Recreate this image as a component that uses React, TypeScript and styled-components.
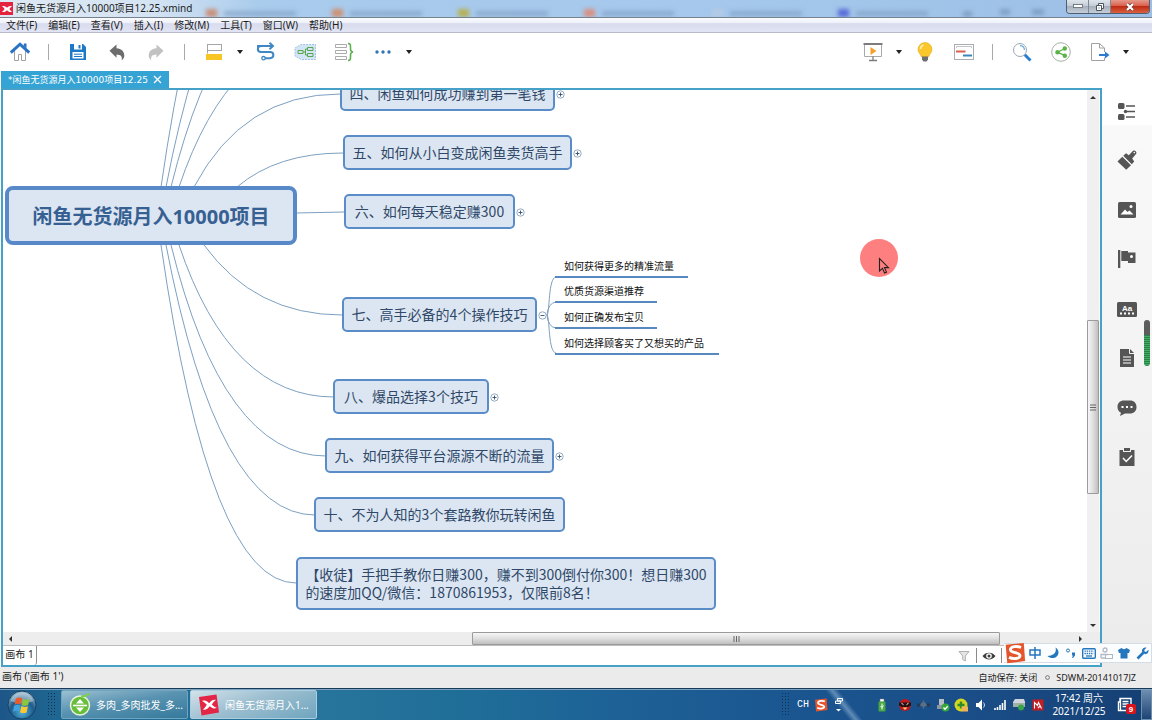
import React from 'react';
import styled, { createGlobalStyle, css } from 'styled-components';

const GlobalStyle = createGlobalStyle`
  * { box-sizing: border-box; }
  html, body { margin: 0; padding: 0; }
  body {
    font-family: "Noto Sans", "Noto Sans CJK SC", sans-serif;
    font-size: 10px;
    line-height: 14px;
    color: #1b1b1b;
    background: #fff;
    overflow: hidden;
  }
  button {
    font: inherit;
    color: inherit;
    border: 0;
    padding: 0;
    margin: 0;
    background: none;
  }
  svg { display: block; }
`;

const Desktop = styled.div`
  position: relative;
  display: flex;
  flex-direction: column;
  height: 100vh;
`;

/* ---------- title bar ---------- */

const TitleBar = styled.header`
  position: relative;
  display: flex;
  align-items: center;
  flex: 0 0 18px;
  overflow: hidden;
  border-bottom: 1px solid #77828f;
  background: linear-gradient(90deg, #dde8f2 0, #d5e4f3 150px, #a9cbec 260px, #a5c8ec 60%, #9dbfe6 100%);
`;

const Backdrop = styled.svg`
  position: absolute;
  left: 0;
  top: 0;
`;

const AppMark = styled.span`
  position: relative;
  display: grid;
  place-items: center;
  width: 13px;
  height: 13px;
  background: #e4243f;
`;

const Title = styled.h1`
  position: relative;
  margin: 0 0 0 3px;
  font-size: 10px;
  line-height: 17px;
  font-weight: 400;
`;

const WindowControls = styled.div`
  position: relative;
  display: flex;
  align-self: flex-start;
  height: 14px;
  margin: 0 2px 0 auto;
  border: 1px solid #4e5f74;
  border-top: 0;
  border-radius: 0 0 4px 4px;
  overflow: hidden;
`;

const WindowButton = styled.button<{ $close?: boolean }>`
  display: grid;
  place-items: center;
  width: ${(p) => (p.$close ? 38 : 22)}px;
  border-right: ${(p) => (p.$close ? 0 : 1)}px solid #7b8794;
  background: ${(p) =>
    p.$close
      ? 'linear-gradient(#e59a8c 0, #d9604b 45%, #bf2c15 50%, #d9613f 100%)'
      : 'linear-gradient(#dfe5ec 0, #c4ccd6 45%, #a7b1bd 50%, #c5ced8 100%)'};
`;

/* ---------- menu bar and toolbar ---------- */

const MenuBar = styled.nav`
  display: flex;
  align-items: center;
  gap: 11px;
  flex: 0 0 15px;
  padding-left: 6px;
  border-bottom: 1px solid #b9bbcb;
  background: linear-gradient(#f9fbfe 0, #eef1f9 35%, #d8dcee 40%, #e1e4f3 100%);
`;

const MenuItem = styled.button`
  line-height: 14px;
  white-space: nowrap;
`;

const Toolbar = styled.div`
  display: flex;
  align-items: center;
  flex: 0 0 38px;
  padding-right: 20px;
`;

const ToolButton = styled.button`
  display: grid;
  place-items: center;
  flex: 0 0 39px;
  height: 38px;
`;

const CaretButton = styled(ToolButton)`
  flex-basis: 13px;
`;

const Divider = styled.span`
  flex: 0 0 1px;
  height: 16px;
  margin: 0 9px;
  background: #a9a9a9;
`;

const Spacer = styled.span<{ $grow?: number }>`
  flex: ${(p) => p.$grow ?? 1} 1 0;
`;

/* ---------- workspace ---------- */

const Workspace = styled.div`
  display: flex;
  flex: 1;
  min-height: 0;
`;

const EditorColumn = styled.main`
  display: flex;
  flex-direction: column;
  flex: 1;
  min-width: 0;
  padding-left: 1px;
  background: #fff;
`;

const TabRow = styled.div`
  display: flex;
  flex: 0 0 17px;
`;

const DocumentTab = styled.div`
  display: flex;
  align-items: center;
  gap: 5px;
  padding: 0 7px;
  color: #fff;
  background: #35a3d3;
`;

const TabLabel = styled.span`
  font-family: "DejaVu Sans", "Noto Sans CJK SC", sans-serif;
  font-size: 9px;
  white-space: nowrap;
`;

const Frame = styled.section`
  display: flex;
  flex-direction: column;
  flex: 1;
  min-height: 0;
  border: 2px solid #46a1c9;
`;

const CanvasRow = styled.div`
  display: flex;
  flex: 1;
  min-height: 0;
`;

const Canvas = styled.div`
  position: relative;
  flex: 1;
  min-width: 0;
  overflow: hidden;
  background: #fff;
`;

const Links = styled.svg`
  position: absolute;
  left: 0;
  top: 0;
`;

const placed = css<{ $x: number; $y: number; $w: number; $h: number }>`
  position: absolute;
  left: ${(p) => p.$x}px;
  top: ${(p) => p.$y}px;
  width: ${(p) => p.$w}px;
  height: ${(p) => p.$h}px;
`;

const CentralTopic = styled.div`
  ${placed}
  display: grid;
  place-items: center;
  padding-top: 2px;
  border: 4px solid #5789c9;
  border-radius: 8px;
  background: #dce6f2;
  color: #376092;
  font-size: 20px;
  line-height: 28px;
  font-weight: 700;
  white-space: nowrap;
`;

const MainTopic = styled.div`
  ${placed}
  display: grid;
  place-items: center;
  padding-bottom: 2px;
  border: 2px solid #5a8dc8;
  border-radius: 5px;
  background: #dce6f2;
  color: #2f4868;
  font-family: "Noto Sans CJK SC", sans-serif;
  font-weight: 400;
  font-size: 14px;
  line-height: 18px;
  white-space: nowrap;
`;

const SubTopic = styled.div`
  ${placed}
  padding-left: 9px;
  border-bottom: 2px solid #5789c0;
  color: #111;
  line-height: 17px;
  white-space: nowrap;
`;

const Fold = styled.button`
  position: absolute;
  top: 12px;
  right: -12px;
  width: 9px;
  height: 9px;
`;

const Pointer = styled.svg`
  position: absolute;
  left: 857px;
  top: 149px;
`;

/* ---------- scroll bars ---------- */

const VerticalTrack = styled.div`
  display: flex;
  flex-direction: column;
  flex: 0 0 12px;
  margin-right: 1px;
  background: #f0f0f0;
`;

const HorizontalTrack = styled.div`
  display: flex;
  flex: 0 0 14px;
  padding-right: 13px;
  border-bottom: 1px solid #bcbcbc;
  background: #ededed;
`;

const Arrow = styled.button`
  display: grid;
  place-items: center;
  flex: 0 0 14px;
`;

const Thumb = styled.div<{ $grow: number; $vertical?: boolean }>`
  display: grid;
  place-items: center;
  flex: ${(p) => p.$grow} 1 0;
  border: 1px solid #9b9b9b;
  border-radius: 1px;
  background: linear-gradient(${(p) => (p.$vertical ? '90deg' : '180deg')}, #f6f6f6 0, #dfdfdf 50%, #bfbfbf 100%);
`;

/* ---------- sheet row and status bar ---------- */

const SheetRow = styled.div`
  display: flex;
  align-items: center;
  flex: 0 0 19px;
  padding-right: 98px;
  background: #fff;
`;

const SheetTab = styled.button`
  align-self: stretch;
  width: 34px;
  padding-bottom: 3px;
  border-right: 1px solid #8f8f8f;
  border-radius: 0 0 3px 0;
`;

const SheetIcon = styled.button`
  display: grid;
  place-items: center;
  width: 24px;
`;

const SheetDivider = styled.span`
  width: 1px;
  height: 15px;
  background: #8a8a8a;
`;

const StatusBar = styled.footer`
  display: flex;
  align-items: center;
  flex: 0 0 21px;
  padding: 0 16px 3px 2px;
  background: #ebebeb;
`;

const StatusNote = styled.span`
  display: flex;
  align-items: center;
  gap: 6px;
  margin-left: 8px;
  padding-top: 3px;
  font-size: 9px;
  white-space: nowrap;
`;

/* ---------- side panel ---------- */

const SidePanel = styled.aside`
  flex: 0 0 50px;
  padding-top: 15px;
  background: linear-gradient(#fff 0, #fff 54px, #f9f9f9 55px, #f3f3f3 300px, #ebebeb 100%);
`;

const SideList = styled.div`
  display: grid;
  grid-template-rows: repeat(8, 1fr);
  height: 396px;
`;

const SideButton = styled.button`
  display: grid;
  place-items: center;
  color: #555;
`;

const Meter = styled.div`
  position: absolute;
  right: 2px;
  top: 320px;
  width: 6px;
  height: 46px;
  border-radius: 3px;
  overflow: hidden;
  background: linear-gradient(#5c5c5c 0, #5c5c5c 15px, transparent 15px),
    repeating-linear-gradient(#3fae62 0, #3fae62 1px, #2c8148 1px, #2c8148 2px);
`;

const InputMethodBar = styled.div`
  position: absolute;
  right: 0;
  bottom: 57px;
  display: flex;
  align-items: center;
  height: 20px;
  width: 148px;
  background: #fcfdff;
  border: 1px solid #d4dde6;
  border-left: 0;
`;

const InputMethodButton = styled.button<{ $wide?: boolean }>`
  display: grid;
  place-items: center;
  flex: ${(p) => (p.$wide ? '0 0 22px' : '1')};
  color: #2477bd;
`;

/* ---------- taskbar ---------- */

const Taskbar = styled.footer`
  display: flex;
  align-items: center;
  flex: 0 0 32px;
  color: #fff;
  border-top: 1px solid #173b5a;
  box-shadow: inset 0 1px 0 #7fa3bf;
  background:
    linear-gradient(51deg, transparent 0, transparent 42%, rgba(200, 225, 245, 0.4) 50%, transparent 58%) 815px 0 / 58px 32px no-repeat,
    linear-gradient(90deg, #1d5688 0, #1f6792 5%, #27759c 28%, #1f6e98 40%, #1d6096 55%, #1a558f 70%, #1a4d87 85%, #153f73 100%);
`;

const StartButton = styled.button`
  display: grid;
  place-items: center;
  flex: 0 0 43px;
`;

const Grip = styled.span`
  flex: 0 0 8px;
  height: 25px;
  margin: 0 6px 0 4px;
  background: radial-gradient(circle, #0e3350 0, #0e3350 1px, transparent 1px) 0 0 / 3px 3px;
`;

const TaskButton = styled.button<{ $active?: boolean }>`
  display: flex;
  align-items: center;
  gap: 5px;
  align-self: stretch;
  flex: 0 0 127px;
  min-width: 0;
  margin: 1px 2px 1px 0;
  padding: 0 3px 0 7px;
  border: 1px solid ${(p) => (p.$active ? '#a9cfe0' : '#6fa5be')};
  border-radius: 2px;
  white-space: nowrap;
  background: ${(p) =>
    p.$active
      ? 'linear-gradient(160deg, #d3e2ea 0, #9dbfd0 45%, #6fa5be 100%)'
      : 'linear-gradient(170deg, #9cc0d2 0, #5993b1 45%, #35799c 100%)'};
`;

const TrayCell = styled.span<{ $w?: number }>`
  display: grid;
  place-items: center;
  flex: 0 0 ${(p) => p.$w ?? 19}px;
`;

const InputLanguage = styled.span`
  font-family: "Liberation Mono", monospace;
`;

const Clock = styled.time`
  flex: 0 0 64px;
  text-align: center;
  line-height: 13px;
  white-space: nowrap;
`;

const ShowDesktop = styled.button`
  align-self: stretch;
  flex: 0 0 11px;
  margin-top: 1px;
  border: 1px solid #6e8fb0;
  background: linear-gradient(#6c8cb0, #1c4474);
`;

/* ---------- drawings ---------- */

const Icon = ({ w = 20, h = 20, children }: { w?: number; h?: number; children: React.ReactNode }) => (
  <svg width={w} height={h} viewBox={`0 0 ${w} ${h}`} fill="none" aria-hidden="true">
    {children}
  </svg>
);

const Caret = () => (
  <Icon w={6} h={4}>
    <path d="M0 0h6L3 4z" fill="#222" />
  </Icon>
);

const XMark = ({ size }: { size: number }) => (
  <svg width={size} height={size} viewBox="0 0 12 12" aria-hidden="true">
    <path d="M1 3.200c2.400-.6 3.600.3 5 1.600C7.400 3.500 8.600 2.600 11 3.200 9.800 4 9 5 8.400 6c.6 1 1.400 2 2.600 2.800-2.400.6-3.600-.3-5-1.600C4.600 8.500 3.400 9.400 1 8.800 2.200 8 3 7 3.600 6 3 5 2.200 4 1 3.200z" fill="#fff" />
  </svg>
);

const HomeIcon = () => (
  <Icon>
    <path d="M4.500 9v9.500h4v-6h3v6h4V9" stroke="#a0a0a0" />
    <path d="M0.800 10.600L10 2.200l9.200 8.400" stroke="#2a72c4" strokeWidth="3" />
    <path d="M13.800 1.500h2.700v5l-2.700-2.400z" fill="#2a72c4" />
  </Icon>
);

const SaveIcon = () => (
  <Icon>
    <path d="M2 2h13l3 3V18H2z" fill="#1c78c8" />
    <path d="M6 2h8v5.500H6z" fill="#fff" />
    <path d="M10.500 3h2v3.500h-2z" fill="#1c78c8" />
    <path d="M4.500 10h11v6.500h-11z" fill="#fff" />
    <path d="M6 12.200h8M6 14.500h8" stroke="#1c78c8" />
  </Icon>
);

const UndoIcon = ({ color, flip }: { color: string; flip?: boolean }) => (
  <Icon>
    <path
      transform={flip ? 'translate(20 0) scale(-1 1)' : undefined}
      d="M2.500 8.800L9.500 2.500v3.800c5 .3 8 3.500 7.800 7.500-.1 2-1 3.300-2.600 4.600.8-4-.9-5.600-5.200-5.800v3.200z"
      fill={color}
    />
  </Icon>
);

const TopicIcon = () => (
  <Icon>
    <rect x="3.500" y="2.500" width="14" height="6" stroke="#a5a5a5" />
    <path d="M3.500 8.500v3" stroke="#a5a5a5" />
    <rect x="2" y="12" width="16" height="6" fill="#f8c624" />
  </Icon>
);

const RelationIcon = () => (
  <Icon>
    <path d="M1 4h16M13.500 .8l3.500 3.200-3.500 3.200" stroke="#3f86c4" strokeWidth="1.900" />
    <path d="M5 4C.8 4 .8 10 5 10h9c4.500 0 4.500 6.200 0 6.200H9" stroke="#3f86c4" strokeWidth="2" />
    <circle cx="7.500" cy="16.200" r="1.700" stroke="#3f86c4" strokeWidth="1.300" />
  </Icon>
);

const BoundaryIcon = () => (
  <Icon w={22}>
    <path d="M1 6L7 2.500h14.500v15H7l-6-3.500z" fill="#d3e4f4" stroke="#a3c5e4" strokeDasharray="2 1" />
    <path d="M4 8.500h5v3H4zM13.500 5.500H19v3h-5.500zM13.500 11.500H19v3h-5.500zM9 10h2.500M13.500 7h-2v6h2" stroke="#57a64b" />
  </Icon>
);

const SummaryIcon = () => (
  <Icon>
    <path d="M1.500 2.500h11v3h-11zM1.500 8.500h11v3h-11zM1.500 14.500h11v3h-11z" stroke="#ababab" />
    <path d="M14 1.500c2.500 0 2.500 1 2.500 4s0 4 2.500 4.500c-2.500.5-2.500 1.500-2.500 4.500s0 4-2.500 4" stroke="#5fae52" strokeWidth="1.600" />
  </Icon>
);

const MoreIcon = () => (
  <Icon w={16} h={4}>
    <circle cx="2" cy="2" r="1.700" fill="#3174b5" />
    <circle cx="8" cy="2" r="1.700" fill="#3174b5" />
    <circle cx="14" cy="2" r="1.700" fill="#3174b5" />
  </Icon>
);

const PresentIcon = () => (
  <Icon>
    <path d="M0.500 2h19" stroke="#7c7c7c" strokeWidth="2" />
    <path d="M1.500 3v11.500h17V3" stroke="#a9a9a9" />
    <path d="M7.500 5l6 4-6 4z" fill="#f5a02b" />
    <path d="M10 14.500v4M6 18.500h8" stroke="#7c7c7c" strokeWidth="1.300" />
  </Icon>
);

const BulbIcon = () => (
  <Icon>
    <path d="M10 .5a7 7 0 0 0-7 7c0 3 2.500 4.500 3.500 7.500h7c1-3 3.500-4.500 3.500-7.500a7 7 0 0 0-7-7z" fill="#fac72c" stroke="#e2aa1c" strokeWidth=".6" />
    <path d="M5.500 7a4.500 4.500 0 0 1 3-4" stroke="#fff0b0" strokeWidth="1.500" />
    <path d="M7 14.500h6v3l-1.500 2h-3L7 17.500z" fill="#6f6f6f" />
  </Icon>
);

const GanttIcon = () => (
  <Icon>
    <rect x=".5" y="2.500" width="19" height="15" stroke="#a7adb3" />
    <path d="M2.500 6V4.500h15V6" stroke="#c0c4c8" />
    <path d="M2 9.500h9.500" stroke="#d9604f" strokeWidth="2" />
    <path d="M9 13.500h9" stroke="#3a87b8" strokeWidth="2" />
  </Icon>
);

const SearchIcon = () => (
  <Icon>
    <circle cx="8" cy="8" r="6.500" stroke="#9aa7b3" />
    <path d="M8 3.500A4.500 4.500 0 0 1 12.500 8" stroke="#75aee0" strokeWidth="1.300" />
    <path d="M12.800 12.800l5.700 5.700" stroke="#2d7bd0" strokeWidth="3" />
  </Icon>
);

const ShareIcon = () => (
  <Icon>
    <circle cx="10" cy="10" r="9.300" stroke="#a6b0a6" />
    <path d="M14 6.500L6.500 10.200l7.500 3.500" stroke="#5bb346" strokeWidth="1.300" />
    <circle cx="13.800" cy="6.500" r="2.200" fill="#5bb346" />
    <circle cx="6.500" cy="10.200" r="2.200" fill="#5bb346" />
    <circle cx="13.800" cy="13.800" r="2.200" fill="#5bb346" />
  </Icon>
);

const ExportIcon = () => (
  <Icon>
    <path d="M14.500 10V6l-5-4.500h-8v17h13v-3" stroke="#a0a0a0" />
    <path d="M9.500 1.500V6h5" stroke="#a0a0a0" />
    <path d="M9 13h7" stroke="#2d7bd0" strokeWidth="2" />
    <path d="M15 9.500l4.500 3.500-4.500 3.500z" fill="#2d7bd0" />
  </Icon>
);

const sideIcons: { name: string; art: React.ReactNode }[] = [
  {
    name: '大纲',
    art: (
      <>
        <rect x="1" y="2" width="6.500" height="6" rx="1.500" fill="currentColor" />
        <rect x="1" y="13" width="6.500" height="6" rx="1.500" fill="currentColor" />
        <circle cx="8.500" cy="10.500" r="1.700" fill="currentColor" />
        <path d="M9 5h9M9 10.500h9M9 16h9" stroke="currentColor" strokeWidth="1.300" />
      </>
    ),
  },
  {
    name: '格式',
    art: (
      <>
        <path d="M.5 11.500L5.300 6.800l8.700 8.400-4.800 4.500z" fill="currentColor" />
        <path d="M6.300 5.800L9 3.200l2.800 2L15.800.9c2-1.500 4.700 1 3.200 3.200L15.200 8.400l2 3-2.400 2.800z" fill="currentColor" />
        <circle cx="17.300" cy="2.600" r=".8" fill="#fff" />
      </>
    ),
  },
  {
    name: '图片',
    art: (
      <>
        <rect x="1" y="2" width="18" height="16" rx="1.500" fill="currentColor" />
        <path d="M3.500 14.500L8 9.500l2.500 2.500 2-1.500 4 4z" fill="#fff" />
        <circle cx="14" cy="6.500" r="1.500" fill="#fff" />
      </>
    ),
  },
  {
    name: '图标',
    art: (
      <>
        <path d="M1 1h2.300v18H1zM4.300 2H11v1.500h7.500V14H11v-2H4.300z" fill="currentColor" />
        <circle cx="14.500" cy="7.500" r="1.500" fill="#fff" />
      </>
    ),
  },
  {
    name: '标签',
    art: (
      <>
        <rect x="0" y="3" width="20" height="15" rx="1.500" fill="currentColor" />
        <text x="10" y="11.500" textAnchor="middle" fontSize="8" fontWeight="700" fill="#fff" fontFamily="Liberation Sans, sans-serif">
          Aa
        </text>
        <path d="M3 14.500h14" stroke="#fff" strokeWidth="2" strokeDasharray="2 2" />
      </>
    ),
  },
  {
    name: '备注',
    art: (
      <>
        <path d="M3 1h10l4 4v14H3z" fill="currentColor" />
        <path d="M12.500 1v4.500H17" stroke="#f5f5f5" />
        <path d="M6 9h8M6 12h8M6 15h8" stroke="#fff" strokeWidth="1.200" />
      </>
    ),
  },
  {
    name: '批注',
    art: (
      <>
        <path d="M7 2.500h6c4 0 6.500 2.500 6.500 6.500s-2.500 6.500-6.500 6.500H8L3 18l1-3.200C1.500 13.500.500 11.500.5 9 .5 5 3 2.500 7 2.500z" fill="currentColor" />
        <path d="M4.500 9h2M9 9h2M13.500 9h2" stroke="#fff" strokeWidth="2" />
      </>
    ),
  },
  {
    name: '任务信息',
    art: (
      <>
        <path d="M2.500 3H6v2h8V3h3.500v16h-15z" fill="currentColor" />
        <path d="M7 1h6v3H7z" fill="currentColor" />
        <path d="M6 11l3.200 3.500L15 8.500" stroke="#fff" strokeWidth="1.500" />
      </>
    ),
  },
];

const SogouMark = ({ size }: { size: number }) => (
  <svg width={size} height={size} viewBox="0 0 20 20" aria-hidden="true">
    <path d="M1.500 2.500L18 .8l1.200 16.500L3 19.300z" fill="#e4552c" />
    <path d="M15.500 5C12 3.500 6 3.800 5.800 7c-.2 3.200 9 2.200 8.800 5.500-.2 3-6.500 3.200-10 1.500" stroke="#fff" strokeWidth="2.600" fill="none" />
  </svg>
);

const FoldMark = ({ open }: { open?: boolean }) => (
  <Icon w={9} h={9}>
    <circle cx="4.500" cy="4.500" r="3.700" fill="#fff" stroke="#7a95b5" strokeWidth=".8" />
    <path d={open ? 'M2.500 4.500h4' : 'M2.500 4.500h4M4.500 2.500v4'} stroke="#33506f" strokeWidth=".9" />
  </Icon>
);

/* ---------- data ---------- */

const menus = ['文件(F)', '编辑(E)', '查看(V)', '插入(I)', '修改(M)', '工具(T)', '窗口(W)', '帮助(H)'];

type Topic = { text: string; x: number; y: number; w: number; fold?: 'open' | 'closed' };

const topics: Topic[] = [
  { text: '四、闲鱼如何成功赚到第一笔钱', x: 337, y: -14, w: 215, fold: 'closed' },
  { text: '五、如何从小白变成闲鱼卖货高手', x: 340, y: 45, w: 229, fold: 'closed' },
  { text: '六、如何每天稳定赚300', x: 341, y: 104, w: 171, fold: 'closed' },
  { text: '七、高手必备的4个操作技巧', x: 339, y: 207, w: 195, fold: 'open' },
  { text: '八、爆品选择3个技巧', x: 330, y: 289, w: 156, fold: 'closed' },
  { text: '九、如何获得平台源源不断的流量', x: 322, y: 348, w: 229, fold: 'closed' },
  { text: '十、不为人知的3个套路教你玩转闲鱼', x: 311, y: 407, w: 251 },
];

const subTopics: Topic[] = [
  { text: '如何获得更多的精准流量', x: 552, y: 168, w: 133 },
  { text: '优质货源渠道推荐', x: 552, y: 193, w: 102 },
  { text: '如何正确发布宝贝', x: 552, y: 219, w: 102 },
  { text: '如何选择顾客买了又想买的产品', x: 552, y: 245, w: 164 },
];

const links = [
  'M158 97Q207 -241 293 -241',
  'M163 97Q215 -173 312 -173',
  'M168 97Q220 -114 323 -114',
  'M176 97Q227 -55 331 -55',
  'M191 97Q240 4 337 4',
  'M234 97Q274 63 340 63',
  'M293 123L341 122',
  'M201 155Q252 225 339 225',
  'M176 155Q227 307 331 307',
  'M168 155Q220 366 323 366',
  'M163 155Q215 425 312 425',
  'M158 155Q207 493 293 493',
  'M544 225C547 222 545 188 553 187',
  'M544 225Q545 213 553 212',
  'M544 225Q545 237 553 238',
  'M544 225C547 228 545 262 553 263',
];

const ghostTabs = [206, 332, 458, 584, 712, 838];

/* ---------- sections ---------- */

const WindowTitle = () => (
  <TitleBar>
    <Backdrop width="1060" height="17" aria-hidden="true">
      <defs>
        <filter id="haze" x="-20%" y="-50%" width="140%" height="200%">
          <feGaussianBlur stdDeviation="2" />
        </filter>
      </defs>
      <g filter="url(#haze)">
        {ghostTabs.map((x, i) => (
          <g key={x}>
            <rect x={x} y="9" width="11" height="8" fill={['#c98f78', '#cf9070', '#b8b052', '#d99080', '#b5cbe4', '#5a6cd8'][i]} />
            <rect x={x + 18} y="11" width="72" height="5" fill="#7c9cc0" opacity=".65" />
          </g>
        ))}
        <path d="M963 14h9M1000 12h10M1032 12h12" stroke="#6d8bb0" strokeWidth="5" opacity=".7" />
      </g>
    </Backdrop>
    <AppMark>
      <XMark size={12} />
    </AppMark>
    <Title>闲鱼无货源月入10000项目12.25.xmind</Title>
    <WindowControls>
      <WindowButton aria-label="最小化">
        <Icon w={10} h={5}>
          <rect x=".5" y=".5" width="9" height="3" fill="#fff" stroke="#59636f" strokeWidth=".8" />
        </Icon>
      </WindowButton>
      <WindowButton aria-label="还原">
        <Icon w={10} h={10}>
          <path d="M3.500 1.500h5v5h-5z" fill="#fff" stroke="#4b5560" />
          <path d="M1.500 3.500h5v5h-5z" fill="#fff" stroke="#4b5560" />
          <path d="M3.500 5.500h1v1h-1z" fill="#4b5560" />
        </Icon>
      </WindowButton>
      <WindowButton $close aria-label="关闭">
        <Icon w={10} h={8}>
          <path d="M2 1l6 6M8 1L2 7" stroke="#6b3a3a" strokeWidth="3.400" />
          <path d="M2 1l6 6M8 1L2 7" stroke="#fff" strokeWidth="2.200" />
        </Icon>
      </WindowButton>
    </WindowControls>
  </TitleBar>
);

const MainToolbar = () => (
  <Toolbar>
    <ToolButton aria-label="主页"><HomeIcon /></ToolButton>
    <Divider />
    <ToolButton aria-label="保存"><SaveIcon /></ToolButton>
    <ToolButton aria-label="撤销"><UndoIcon color="#6d6d6d" /></ToolButton>
    <ToolButton aria-label="重做"><UndoIcon color="#c2c2c2" flip /></ToolButton>
    <Divider />
    <ToolButton aria-label="主题"><TopicIcon /></ToolButton>
    <CaretButton aria-label="主题选项"><Caret /></CaretButton>
    <ToolButton aria-label="联系"><RelationIcon /></ToolButton>
    <ToolButton aria-label="外框"><BoundaryIcon /></ToolButton>
    <ToolButton aria-label="概要"><SummaryIcon /></ToolButton>
    <ToolButton aria-label="更多"><MoreIcon /></ToolButton>
    <CaretButton aria-label="更多选项"><Caret /></CaretButton>
    <Spacer />
    <ToolButton aria-label="演示"><PresentIcon /></ToolButton>
    <CaretButton aria-label="演示选项"><Caret /></CaretButton>
    <ToolButton aria-label="头脑风暴"><BulbIcon /></ToolButton>
    <ToolButton aria-label="甘特图"><GanttIcon /></ToolButton>
    <Divider />
    <ToolButton aria-label="搜索"><SearchIcon /></ToolButton>
    <ToolButton aria-label="分享"><ShareIcon /></ToolButton>
    <ToolButton aria-label="导出"><ExportIcon /></ToolButton>
    <CaretButton aria-label="导出选项"><Caret /></CaretButton>
  </Toolbar>
);

const MindMap = () => (
  <Canvas>
    <Links width="720" height="542" fill="none" aria-hidden="true">
      {links.map((d) => (
        <path key={d} d={d} stroke="#7da0c1" />
      ))}
    </Links>
    <CentralTopic $x={2} $y={96} $w={292} $h={59}>闲鱼无货源月入10000项目</CentralTopic>
    {topics.map((t) => (
      <MainTopic key={t.text} $x={t.x} $y={t.y} $w={t.w} $h={35}>
        {t.text}
        {t.fold && (
          <Fold aria-label={t.fold === 'open' ? '收起' : '展开'}>
            <FoldMark open={t.fold === 'open'} />
          </Fold>
        )}
      </MainTopic>
    ))}
    <MainTopic $x={293} $y={467} $w={420} $h={53}>
      <span>
        【收徒】手把手教你日赚300，赚不到300倒付你300！想日赚300
        <br />
        的速度加QQ/微信：1870861953，仅限前8名！
      </span>
    </MainTopic>
    {subTopics.map((t) => (
      <SubTopic key={t.text} $x={t.x} $y={t.y} $w={t.w} $h={20}>{t.text}</SubTopic>
    ))}
    <Pointer width="38" height="38" aria-hidden="true">
      <circle cx="19" cy="19" r="19" fill="#fd7f7f" />
      <path d="M19.500 19.500v12.500l3-2.700 2 4.700 2-.9-2-4.500h4z" fill="#fd7f7f" stroke="#222" strokeWidth="1.100" />
    </Pointer>
  </Canvas>
);

const Editor = () => (
  <EditorColumn>
    <TabRow>
      <DocumentTab>
        <TabLabel>*闲鱼无货源月入10000项目12.25</TabLabel>
        <button aria-label="关闭标签">
          <Icon w={9} h={9}>
            <path d="M1 1l7 7M8 1L1 8" stroke="#fff" strokeWidth="1.300" />
          </Icon>
        </button>
      </DocumentTab>
    </TabRow>
    <Frame>
      <CanvasRow>
        <MindMap />
        <VerticalTrack>
          <Arrow aria-label="向上滚动"><Icon w={6} h={3}><path d="M0 3h6L3 0z" fill="#333" /></Icon></Arrow>
          <Spacer $grow={217} />
          <Thumb $grow={173} $vertical>
            <Icon w={6} h={7}><path d="M0 1h6M0 3.500h6M0 6h6" stroke="#666" /></Icon>
          </Thumb>
          <Spacer $grow={124} />
          <Arrow aria-label="向下滚动"><Icon w={6} h={3}><path d="M0 0h6L3 3z" fill="#333" /></Icon></Arrow>
        </VerticalTrack>
      </CanvasRow>
      <HorizontalTrack>
        <Arrow aria-label="向左滚动"><Icon w={3} h={6}><path d="M3 0v6L0 3z" fill="#333" /></Icon></Arrow>
        <Spacer $grow={456} />
        <Thumb $grow={527}>
          <Icon w={7} h={6}><path d="M1 0v6M3.500 0v6M6 0v6" stroke="#666" /></Icon>
        </Thumb>
        <Spacer $grow={73} />
        <Arrow aria-label="向右滚动"><Icon w={3} h={6}><path d="M0 0v6l3-3z" fill="#333" /></Icon></Arrow>
      </HorizontalTrack>
      <SheetRow>
        <SheetTab>画布 1</SheetTab>
        <Spacer />
        <SheetIcon aria-label="筛选">
          <Icon w={12} h={12}><path d="M1 1.500h10L7.300 6v5L4.700 9.500V6z" fill="#e6e6e6" stroke="#b0b0b0" /></Icon>
        </SheetIcon>
        <SheetDivider />
        <SheetIcon aria-label="显示">
          <Icon w={14} h={10}>
            <path d="M.5 5C3.500.500 10.500.500 13.500 5 10.500 9.500 3.500 9.500.5 5z" fill="#3e3e3e" />
            <circle cx="7" cy="5" r="2.800" fill="#fff" />
            <circle cx="7" cy="5" r="1.500" fill="#3e3e3e" />
          </Icon>
        </SheetIcon>
        <SheetDivider />
      </SheetRow>
    </Frame>
  </EditorColumn>
);

const InputMethod = () => (
  <InputMethodBar>
    <InputMethodButton $wide aria-label="搜狗输入法"><SogouMark size={22} /></InputMethodButton>
    <InputMethodButton aria-label="中文">
      <Icon w={12} h={14}><path d="M1 4h10v5H1zM6 1v12" stroke="currentColor" strokeWidth="1.500" /></Icon>
    </InputMethodButton>
    <InputMethodButton aria-label="半角">
      <Icon w={12} h={12}><path d="M8.500.5c1.500 5-2 8-8 8.500 4 4 11 2 11-3.500 0-2-1-4-3-5z" fill="currentColor" /></Icon>
    </InputMethodButton>
    <InputMethodButton aria-label="中文标点">
      <Icon w={12} h={12}>
        <circle cx="3" cy="3.500" r="1.500" stroke="currentColor" />
        <path d="M7 5.500h3v3L8 11H7l1-2.500H7z" fill="currentColor" />
      </Icon>
    </InputMethodButton>
    <InputMethodButton aria-label="软键盘">
      <Icon w={14} h={11}>
        <rect x=".7" y=".7" width="12.600" height="9.600" rx="1" stroke="currentColor" strokeWidth="1.400" />
        <path d="M2.500 3.200h9M2.500 5.500h9" stroke="currentColor" strokeWidth="1.300" strokeDasharray="1.400 .8" />
        <path d="M4 8h6" stroke="currentColor" strokeWidth="1.300" />
      </Icon>
    </InputMethodButton>
    <InputMethodButton aria-label="账户">
      <Icon w={13} h={13}>
        <circle cx="5" cy="3" r="2" stroke="#b3b9c4" strokeWidth="1.300" />
        <path d="M1 11V7.500h7M1 11h4" stroke="#b3b9c4" strokeWidth="1.300" />
        <rect x="5.500" y="7.500" width="7" height="4" stroke="#b3b9c4" />
      </Icon>
    </InputMethodButton>
    <InputMethodButton aria-label="皮肤">
      <Icon w={12} h={12}><path d="M3.500 1C5 2.500 7 2.500 8.500 1L12 3l-1 3H9.500v5.500h-7V6H1L0 3z" fill="currentColor" /></Icon>
    </InputMethodButton>
    <InputMethodButton aria-label="工具箱">
      <Icon w={13} h={13}><path d="M1.500 11.500l6-6" stroke="currentColor" strokeWidth="2.600" /><path d="M10.500.8L8.300 3l.3 1.500 1.500.4 2.300-2.200c.7 2.500-1 4.800-3.400 4.500L6 4.500C5.500 2 8 0 10.500.8z" fill="currentColor" /></Icon>
    </InputMethodButton>
  </InputMethodBar>
);

const SystemTaskbar = () => (
  <Taskbar>
    <StartButton aria-label="开始">
      <Icon w={30} h={30}>
        <defs>
          <radialGradient id="orb" cx=".5" cy=".75" r=".7">
            <stop offset="0" stopColor="#4fb0dc" />
            <stop offset=".6" stopColor="#1d5b8c" />
            <stop offset="1" stopColor="#8fb3c8" />
          </radialGradient>
        </defs>
        <circle cx="15" cy="15" r="14" fill="url(#orb)" stroke="#17405f" />
        <path d="M3.500 11a12 12 0 0 1 23 0c-7 3-16 3-23 0z" fill="#fff" opacity=".35" />
        <path d="M9 8.500c2.300-1.400 4.200-1.400 6.100-.2l-1.400 6.100c-1.900-1-3.800-.9-6.100.2z" fill="#ee5a2a" />
        <path d="M16 8.800c2.300 1.100 4.200 1.100 6.600.1l-1.500 6.200c-2.300 1-4.400.9-6.500-.2z" fill="#8cc63e" />
        <path d="M7.300 15.600c2.300-1.100 4.200-1.100 6.100-.1L12.100 21.500c-1.900-1-3.900-.9-6.200.2z" fill="#41a4e0" />
        <path d="M14.400 16c2.300 1.100 4.300 1.200 6.500.2L19.500 22.400c-2.300 1-4.500.8-6.500-.2z" fill="#fdc730" />
      </Icon>
    </StartButton>
    <Grip />
    <TaskButton>
      <Icon w={22} h={24}>
        <circle cx="11" cy="12.500" r="9.500" fill="#68bd3b" stroke="#e6f4dc" strokeWidth="1.500" />
        <path d="M7 10.500L11 6l4 4.500zM7 14.500h8L11 19z" fill="#fff" />
        <path d="M4 12.500h14" stroke="#fff" strokeWidth="1.600" />
        <path d="M12 3.500C15 3.500 18 2.500 20 .5" stroke="#7fd04a" strokeWidth="2" />
      </Icon>
      多肉_多肉批发_多...
    </TaskButton>
    <TaskButton $active>
      <svg width="22" height="24" viewBox="0 0 22 24" aria-hidden="true">
        <path d="M1 4l17.500-2.500L21 19.500 3.500 22.500z" fill="#e32645" />
        <path d="M4 8c3.500-1.200 5 .2 7 2.200 1.800-2.200 3.500-4 7-3.400-1.800 1.400-3.200 3-4.200 4.600 1.400 1.400 3 2.600 5 3.400-3.200 1.400-5 .2-7-1.600-1.700 2.200-3.500 3.800-7 3.400 1.800-1.400 3-3 4-4.800C7.500 10.200 6 8.900 4 8z" fill="#fff" />
      </svg>
      闲鱼无货源月入1...
    </TaskButton>
    <Spacer />
    <Grip />
    <TrayCell $w={16}><InputLanguage>CH</InputLanguage></TrayCell>
    <TrayCell $w={20}><SogouMark size={14} /></TrayCell>
    <TrayCell $w={16}>
      <Icon w={8} h={16}>
        <path d="M2.500 1.500h5v2.500h-5zM.500 4h5v2.500h-5z" stroke="#fff" />
        <path d="M1 12h5l-2.500 2.500z" fill="#fff" />
      </Icon>
    </TrayCell>
    <TrayCell $w={22} />
    <TrayCell $w={26}>
      <Icon w={10} h={14}>
        <path d="M3 1h4v3H3z" fill="#fff" stroke="#777" strokeWidth=".5" />
        <rect x="1.500" y="3.500" width="7" height="10" rx="1" fill="#48a843" />
        <path d="M5 5.500v6M3.500 8L5 9.500 6.500 7.500" stroke="#fff" />
      </Icon>
    </TrayCell>
    <TrayCell>
      <Icon w={14} h={14}>
        <circle cx="7" cy="7" r="6" fill="#c4171c" />
        <path d="M1 4.500h12v3L10 9H4L1 7.500z" fill="#281010" />
        <path d="M3.500 5.200l2 1.500M10.500 5.200l-2 1.500" stroke="#fff" />
        <path d="M4.500 9.500h5L7 12z" fill="#f3cf72" />
      </Icon>
    </TrayCell>
    <TrayCell>
      <Icon w={13} h={13}>
        <path d="M6.500 2v9M1 7h11" stroke="#51667c" strokeWidth="1.300" />
        <circle cx="6.500" cy="6.500" r="2.500" fill="#5b7086" />
        <path d="M0 5.500h3v3H0zM10 5.500h3v3h-3z" fill="#253a50" />
      </Icon>
    </TrayCell>
    <TrayCell>
      <Icon w={14} h={14}>
        <path d="M3 1h5v7H3z" fill="#b8bec5" />
        <path d="M1 7h5v4H1z" fill="#8d959e" />
        <circle cx="9.500" cy="9.500" r="4" fill="#36a63c" />
        <path d="M7.500 9.500l1.500 1.700 2.700-3" stroke="#fff" strokeWidth="1.300" />
      </Icon>
    </TrayCell>
    <TrayCell>
      <Icon w={15} h={14}>
        <circle cx="7" cy="7" r="6.500" fill="#d4d51f" />
        <path d="M7 3.500v7M3.500 7h7" stroke="#2f8a2c" strokeWidth="2.400" />
        <path d="M7.500 8.500h6.500v5H7.500z" fill="#f0b458" />
      </Icon>
    </TrayCell>
    <TrayCell>
      <Icon w={12} h={14}>
        <path d="M1 5h2.500L7 1.500v11L3.500 9H1z" fill="#fff" />
        <path d="M8.500 4.500c1.300 1.500 1.300 3.500 0 5" stroke="#cfdcea" />
      </Icon>
    </TrayCell>
    <TrayCell>
      <Icon w={12} h={12}><path d="M1 11V9M3.500 11V8M6 11V6M8.500 11V4M11 11V1" stroke="#fff" strokeWidth="1.600" /></Icon>
    </TrayCell>
    <TrayCell>
      <Icon w={14} h={13}>
        <path d="M3 1h9l1 3v5H1V4z" fill="#cfd5da" />
        <path d="M1 5h12v4H1z" fill="#9fb0a5" />
        <circle cx="9" cy="9.500" r="3" fill="#38a34a" />
      </Icon>
    </TrayCell>
    <TrayCell>
      <Icon w={12} h={12}>
        <rect x=".5" y=".5" width="11" height="11" fill="#c41d22" />
        <path d="M2.500 9.500v-6l3 3 1-3 3 6M6 9l2-2" stroke="#fff" strokeWidth="1.100" />
      </Icon>
    </TrayCell>
    <Clock>
      17:42 周六
      <br />
      2021/12/25
    </Clock>
    <TrayCell $w={30}>
      <Icon w={20} h={18}>
        <path d="M4 2.500h11v12H2.500V6H4z" stroke="#fff" strokeWidth="1.400" />
        <path d="M4.500 3v11M6.500 5.500h6M6.500 8h6M6.500 10.500h4" stroke="#fff" strokeWidth="1.300" />
        <rect x="10" y="8" width="10" height="10" rx="2" fill="#d8141c" />
        <text x="15" y="16" textAnchor="middle" fontSize="8" fontWeight="700" fill="#fff" fontFamily="Liberation Sans, sans-serif">
          9
        </text>
      </Icon>
    </TrayCell>
    <ShowDesktop aria-label="显示桌面" />
  </Taskbar>
);

export default function App() {
  return (
    <Desktop>
      <GlobalStyle />
      <WindowTitle />
      <MenuBar>
        {menus.map((m) => (
          <MenuItem key={m}>{m}</MenuItem>
        ))}
      </MenuBar>
      <MainToolbar />
      <Workspace>
        <Editor />
        <SidePanel>
          <SideList>
            {sideIcons.map((s) => (
              <SideButton key={s.name} aria-label={s.name}>
                <Icon>{s.art}</Icon>
              </SideButton>
            ))}
          </SideList>
        </SidePanel>
      </Workspace>
      <StatusBar>
        <span>画布 ('画布 1')</span>
        <Spacer />
        <StatusNote>自动保存: 关闭</StatusNote>
        <StatusNote>
          <Icon w={5} h={5}><circle cx="2.500" cy="2.500" r="1.900" stroke="#777" /></Icon>
          SDWM-20141017JZ
        </StatusNote>
      </StatusBar>
      <SystemTaskbar />
      <Meter />
      <InputMethod />
    </Desktop>
  );
}
